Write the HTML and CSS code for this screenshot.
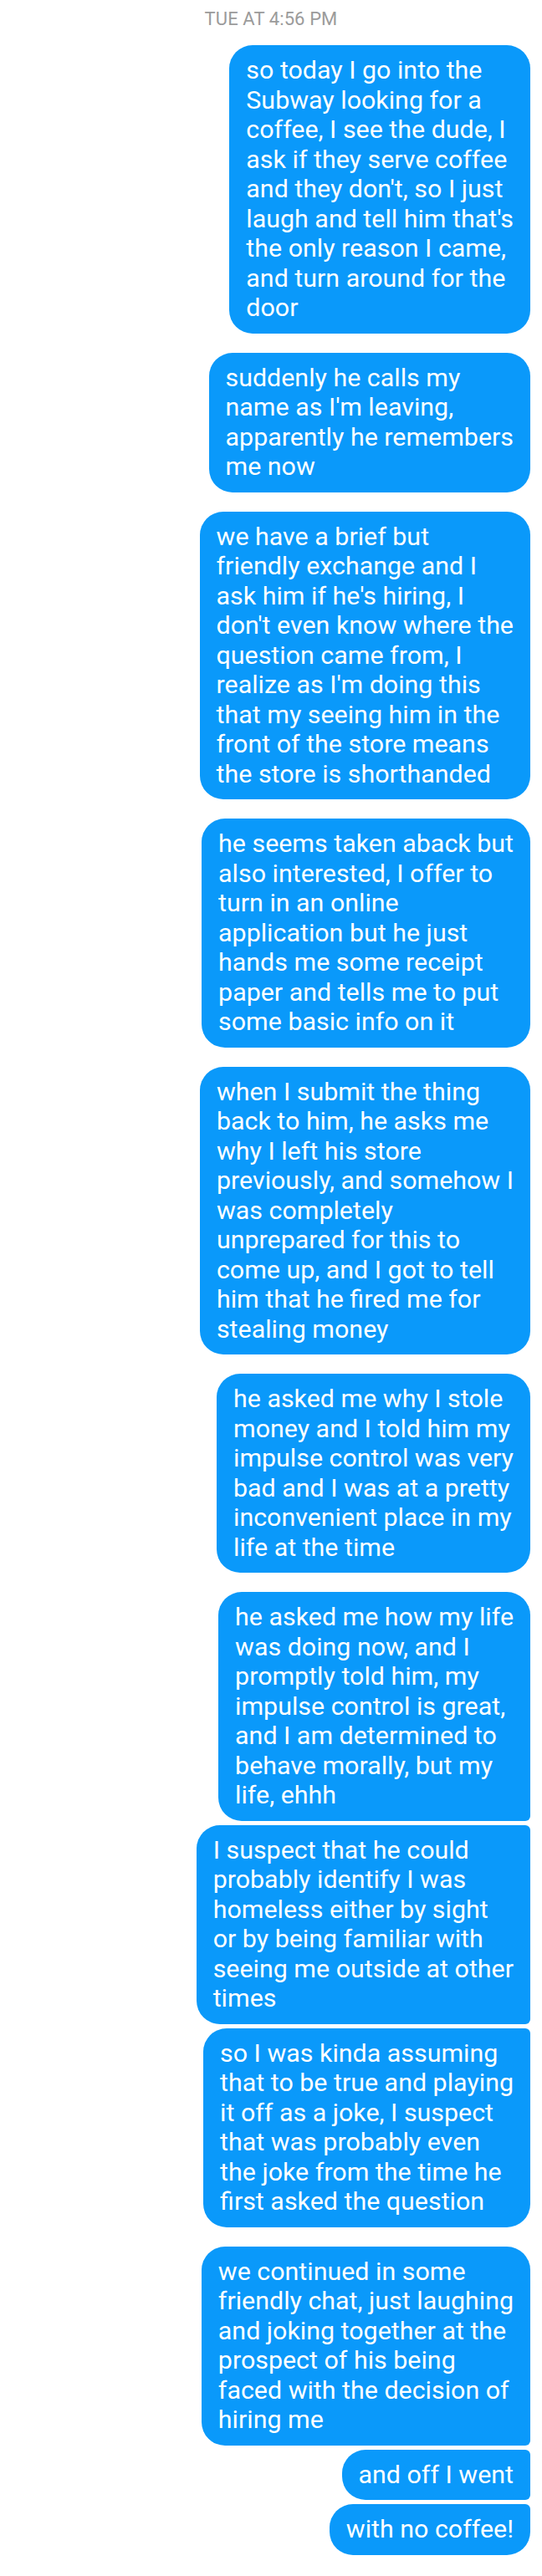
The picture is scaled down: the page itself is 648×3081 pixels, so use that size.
FILE: index.html
```html
<!DOCTYPE html>
<html lang="en">
<head>
<meta charset="utf-8">
<title>Messages</title>
<link rel="stylesheet" href="styles.css">
</head>
<body>
<main class="thread">
  <div class="timestamp">TUE AT 4:56 PM</div>

  <div class="bubble">so today I go into the<br>Subway looking for a<br>coffee, I see the dude, I<br>ask if they serve coffee<br>and they don't, so I just<br>laugh and tell him that's<br>the only reason I came,<br>and turn around for the<br>door</div>

  <div class="bubble">suddenly he calls my<br>name as I'm leaving,<br>apparently he remembers<br>me now</div>

  <div class="bubble">we have a brief but<br>friendly exchange and I<br>ask him if he's hiring, I<br>don't even know where the<br>question came from, I<br>realize as I'm doing this<br>that my seeing him in the<br>front of the store means<br>the store is shorthanded</div>

  <div class="bubble">he seems taken aback but<br>also interested, I offer to<br>turn in an online<br>application but he just<br>hands me some receipt<br>paper and tells me to put<br>some basic info on it</div>

  <div class="bubble">when I submit the thing<br>back to him, he asks me<br>why I left his store<br>previously, and somehow I<br>was completely<br>unprepared for this to<br>come up, and I got to tell<br>him that he fired me for<br>stealing money</div>

  <div class="bubble">he asked me why I stole<br>money and I told him my<br>impulse control was very<br>bad and I was at a pretty<br>inconvenient place in my<br>life at the time</div>

  <div class="bubble first">he asked me how my life<br>was doing now, and I<br>promptly told him, my<br>impulse control is great,<br>and I am determined to<br>behave morally, but my<br>life, ehhh</div>
  <div class="bubble mid">I suspect that he could<br>probably identify I was<br>homeless either by sight<br>or by being familiar with<br>seeing me outside at other<br>times</div>
  <div class="bubble last">so I was kinda assuming<br>that to be true and playing<br>it off as a joke, I suspect<br>that was probably even<br>the joke from the time he<br>first asked the question</div>

  <div class="bubble first">we continued in some<br>friendly chat, just laughing<br>and joking together at the<br>prospect of his being<br>faced with the decision of<br>hiring me</div>
  <div class="bubble mid">and off I went</div>
  <div class="bubble last">with no coffee!</div>
</main>
</body>
</html>
```

FILE: styles.css
```css
html, body {
  margin: 0;
  padding: 0;
  background: #ffffff;
}

.thread {
  display: flex;
  flex-direction: column;
  align-items: flex-end;
  padding: 0 14px 16px 0;
  font-family: Roboto, "Noto Sans", "Liberation Sans", sans-serif;
}

.timestamp {
  align-self: stretch;
  text-align: center;
  padding-left: 14px;
  margin-top: 8px;
  height: 46px;
  line-height: 30px;
  font-size: 22px;
  color: #9b9b9b;
  letter-spacing: 0.1px;
}

.bubble {
  background: #0a99fa;
  color: #ffffff;
  font-size: 30.4px;
  line-height: 35.5px;
  padding: 12px 20px 13px 20px;
  border-radius: 28px;
  white-space: nowrap;
  margin-bottom: 23px;
}

.bubble.first {
  border-bottom-right-radius: 6px;
  margin-bottom: 5px;
}

.bubble.mid {
  border-top-right-radius: 6px;
  border-bottom-right-radius: 6px;
  margin-bottom: 5px;
}

.bubble.last {
  border-top-right-radius: 6px;
}
```
